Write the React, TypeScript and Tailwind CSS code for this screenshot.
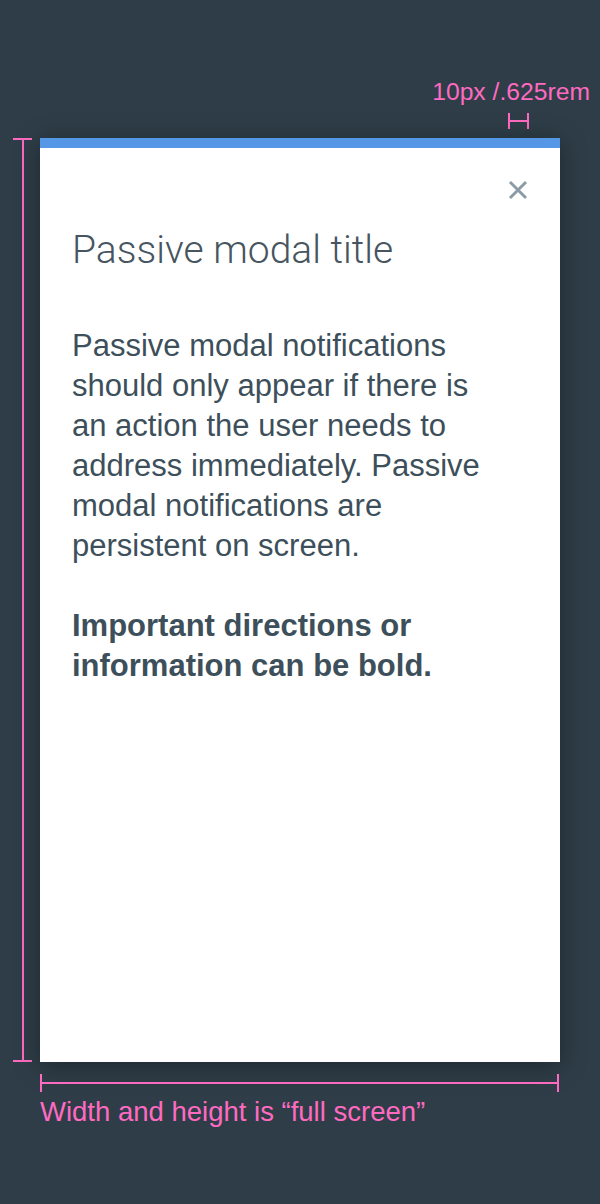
import React from 'react';

const font = { fontFamily: '"Liberation Sans", Arial, sans-serif' };

function CloseIcon() {
  return (
    <svg width="20" height="20" viewBox="0 0 20 20" className="block">
      <path d="M2 2 L18 18 M18 2 L2 18" stroke="#8c9ba5" strokeWidth="3" strokeLinecap="butt" />
    </svg>
  );
}

export default function App() {
  return (
    <div
      className="w-[600px] h-[1204px] bg-[#2e3d47] pt-[80px] text-[#ff6ac1] overflow-hidden"
      style={font}
    >
      {/* Top measurement */}
      <div className="flex justify-end pr-[10px]">
        <span className="text-[24.7px] leading-[24px]">10px /.625rem</span>
      </div>
      <div className="flex pl-[508px] pt-[9px] h-[34px]">
        <div className="flex items-center h-[16px] w-[21px]">
          <div className="w-[2px] h-full bg-[#ff6ac1]" />
          <div className="flex-1 h-[2px] bg-[#ff6ac1]" />
          <div className="w-[2px] h-full bg-[#ff6ac1]" />
        </div>
      </div>

      {/* Side marker + modal */}
      <div className="flex">
        <div className="w-[40px] flex justify-start pl-[13px]">
          <div className="flex flex-col items-center w-[19px]">
            <div className="w-full h-[2px] bg-[#ff6ac1]" />
            <div className="flex-1 w-[2px] bg-[#ff6ac1]" />
            <div className="w-full h-[2px] bg-[#ff6ac1]" />
          </div>
        </div>
        <div className="w-[520px] h-[924px] bg-white flex flex-col shadow-[0_4px_24px_rgba(0,0,0,0.35)]">
          <div className="h-[10px] bg-[#5596e6]" />
          <div className="flex justify-end pt-[32px] pr-[32px]">
            <CloseIcon />
          </div>
          <div className="px-[32px] pt-[30px] text-[#3d4f5a]">
            <h1
              className="text-[39px] leading-[40px] font-light text-[#46555f]"
              style={{ fontFamily: 'Roboto, "Liberation Sans", sans-serif' }}
            >
              Passive modal title
            </h1>
            <p className="mt-[56px] text-[31px] leading-[40px] max-w-[420px]">
              Passive modal notifications should only appear if there is an action the user needs to
              address immediately. Passive modal notifications are persistent on screen.
            </p>
            <p className="mt-[40px] text-[31px] leading-[40px] font-bold max-w-[420px]">
              Important directions or information can be bold.
            </p>
          </div>
        </div>
      </div>

      {/* Bottom measurement */}
      <div className="pl-[40px] pt-[12px]">
        <div className="flex items-center h-[18px] w-[519px]">
          <div className="w-[2px] h-full bg-[#ff6ac1]" />
          <div className="flex-1 h-[2px] bg-[#ff6ac1]" />
          <div className="w-[2px] h-full bg-[#ff6ac1]" />
        </div>
        <p className="mt-[4px] text-[27.5px] leading-[32px]">Width and height is “full screen”</p>
      </div>
    </div>
  );
}
